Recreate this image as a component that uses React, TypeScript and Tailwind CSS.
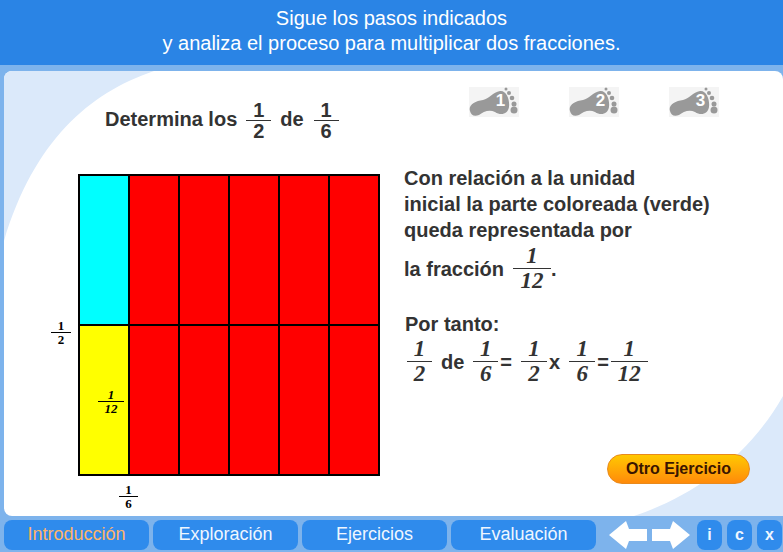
const NAV = ["Introducción", "Exploración", "Ejercicios", "Evaluación"];

const Frac = ({ n, d, big }: { n: string; d: string; big?: boolean }) => (
  <span className="inline-flex flex-col items-center align-middle w-[38px]">
    <span className={`font-['Liberation_Serif',serif] italic text-[#333] ${big ? "text-[23px] leading-[24px]" : "text-[23px] leading-[24px]"}`}>{n}</span>
    <span className="w-full h-px bg-[#333]" />
    <span className="font-['Liberation_Serif',serif] italic text-[#333] text-[23px] leading-[24px]">{d}</span>
  </span>
);

const SmallFrac = ({ n, d, italic, w }: { n: string; d: string; italic?: boolean; w: string }) => (
  <span className={`inline-flex flex-col items-center font-['Liberation_Serif',serif] font-bold text-[13px] leading-[13px] text-black ${italic ? "italic" : ""} ${w}`}>
    <span>{n}</span>
    <span className="w-full h-px bg-black" />
    <span>{d}</span>
  </span>
);

const BoldFrac = ({ n, d }: { n: string; d: string }) => (
  <span className="inline-flex flex-col items-center w-[25px] text-[20px] leading-[20px] font-bold text-[#333]">
    <span>{n}</span>
    <span className="w-full h-px bg-[#333]" />
    <span>{d}</span>
  </span>
);

const Foot = ({ num }: { num: string }) => (
  <div className="relative w-[50px] h-[30px] bg-[#f4f4f4]">
    <svg viewBox="0 0 50 30" className="w-[50px] h-[30px]">
      <path d="M1 24C-1 18 6 14 14 13C20 12 24 5 31 4C37 3 41 12 40 20C39 27 32 29 26 25C20 22 14 25 10 28C5 30 2 28 1 24Z" fill="#999" />
      <circle cx="37" cy="2" r="1.5" fill="#999" />
      <circle cx="40" cy="6" r="2" fill="#999" />
      <circle cx="43" cy="11" r="2.3" fill="#999" />
      <circle cx="45" cy="17" r="2.5" fill="#999" />
      <circle cx="45" cy="23" r="3.5" fill="#999" />
    </svg>
    <span className="absolute left-[26px] top-[4px] w-[11px] text-center text-[17px] leading-[20px] font-bold text-white">{num}</span>
  </div>
);

export default function App() {
  return (
    <div className="w-[783px] h-[552px] overflow-hidden flex flex-col bg-[#7db3ec] font-['Liberation_Sans',Arial,sans-serif]">
      {/* Header */}
      <header className="h-[65px] shrink-0 pt-[6px] bg-[#2a84e5] text-center text-white text-[20px] leading-[25px]">
        <p>Sigue los pasos indicados</p>
        <p>y analiza el proceso para multiplicar dos fracciones.</p>
      </header>

      {/* Panel */}
      <main className="relative ml-[4px] mt-[6px] h-[445px] shrink-0 rounded-l-[8px] rounded-tr-[8px] overflow-hidden bg-white flex">
        <svg viewBox="0 0 779 445" className="absolute inset-0 w-[779px] h-[445px]">
          <path d="M0 0H150C85 22 30 70 0 170Z" fill="#dbe9fa" />
          <path d="M779 325C745 385 690 425 630 445H779Z" fill="#dbe9fa" />
        </svg>

        {/* Left column */}
        <section className="relative w-[400px] shrink-0 pl-[74px]">
          <div className="h-[103px] pt-[29px] pl-[27px] flex items-start gap-[9px] text-[20px] leading-[20px] font-bold text-[#333]">
            <span className="mt-[9px]">Determina los</span>
            <BoldFrac n="1" d="2" />
            <span className="mt-[9px]">de</span>
            <span className="ml-[1px]"><BoldFrac n="1" d="6" /></span>
          </div>

          <div className="relative w-[302px]">
            <div className="grid grid-cols-6 grid-rows-[148px_148px] gap-[2px] p-[2px] bg-black">
              <div className="bg-[#00ffff]" />
              {[0, 1, 2, 3, 4].map(i => <div key={i} className="bg-[#ff0000]" />)}
              <div className="bg-[#ffff00] flex items-center justify-end pr-[4px] pt-[3px]">
                <SmallFrac n="1" d="12" italic w="w-[26px]" />
              </div>
              {[0, 1, 2, 3, 4].map(i => <div key={i} className="bg-[#ff0000]" />)}
            </div>
            <span className="absolute left-[-27px] top-[139px]"><SmallFrac n="1" d="2" w="w-[20px]" /></span>
            <span className="absolute left-[41px] top-[303px]"><SmallFrac n="1" d="6" w="w-[19px]" /></span>
          </div>
        </section>

        {/* Right column */}
        <section className="relative flex-1 flex flex-col">
          <div className="flex gap-[50px] pl-[65px] pt-[16px] h-[94px]">
            <Foot num="1" />
            <Foot num="2" />
            <Foot num="3" />
          </div>
          <div className="text-[20px] leading-[26px] font-bold text-[#333]">
            <p>Con relación a la unidad</p>
            <p>inicial la parte coloreada (verde)</p>
            <p>queda representada por</p>
          </div>
          <div className="mt-[1px] flex items-center text-[20px] font-bold text-[#333]">
            <span>la fracción</span>
            <span className="ml-[9px]"><Frac n="1" d="12" /></span>
            <span>.</span>
          </div>
          <p className="mt-[18px] pl-[1px] text-[20px] leading-[26px] font-bold text-[#333]">Por tanto:</p>
          <div className="flex items-center text-[20px] font-bold text-[#333]">
            <span className="w-[25px] ml-[3px]"><span className="block w-[25px] [&>span]:w-full"><Frac n="1" d="2" /></span></span>
            <span className="ml-[9px]">de</span>
            <span className="ml-[9px] w-[25px] [&>span]:w-full"><Frac n="1" d="6" /></span>
            <span className="ml-[2px]">=</span>
            <span className="ml-[9px] w-[26px] [&>span]:w-full"><Frac n="1" d="2" /></span>
            <span className="ml-[2px]">x</span>
            <span className="ml-[9px] w-[26px] [&>span]:w-full"><Frac n="1" d="6" /></span>
            <span className="ml-[2px]">=</span>
            <span className="ml-[2px] w-[37px] [&>span]:w-full"><Frac n="1" d="12" /></span>
          </div>
          <div className="flex justify-end pr-[33px] mt-[68px]">
            <button className="w-[143px] h-[30px] rounded-full border border-[#e98a1c] bg-gradient-to-b from-[#ffc800] to-[#ff8a0a] text-[16px] font-bold text-[#3a1500]">
              Otro Ejercicio
            </button>
          </div>
        </section>
      </main>

      {/* Footer nav */}
      <footer className="flex-1 flex items-center pl-[4px] pt-[1px] gap-[4px]">
        {NAV.map((label, i) => (
          <button
            key={label}
            className={`w-[145px] h-[30px] rounded-[8px] bg-[#2f8bec] text-[18px] ${i === 0 ? "text-[#ffb469]" : "text-[#eef6ff]"}`}
          >
            {label}
          </button>
        ))}
        <div className="ml-[9px] flex gap-[5px]">
          <svg viewBox="0 0 38 28" className="w-[38px] h-[28px]">
            <path d="M0 14L17 0L20 8H38V20H20L17 28Z" fill="#fff" />
          </svg>
          <svg viewBox="0 0 38 28" className="w-[38px] h-[28px]">
            <path d="M38 14L21 0L18 8H0V20H18L21 28Z" fill="#fff" />
          </svg>
        </div>
        <div className="ml-[3px] flex gap-[5px]">
          {["i", "c", "x"].map(l => (
            <button key={l} className="w-[25px] h-[30px] rounded-[8px] bg-[#2f8bec] text-[16px] font-bold text-[#eef6ff]">
              {l}
            </button>
          ))}
        </div>
      </footer>
    </div>
  );
}
